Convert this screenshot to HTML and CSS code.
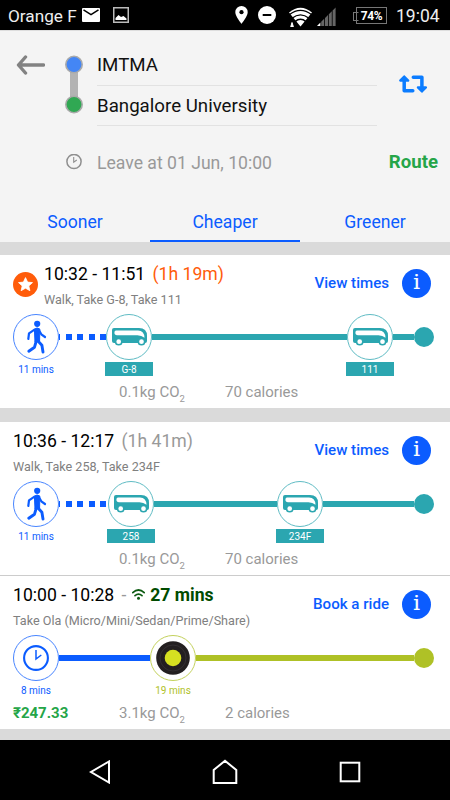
FILE: index.html
```html
<!DOCTYPE html>
<html lang="en">
<head>
<meta charset="UTF-8" />
<meta name="viewport" content="width=device-width, initial-scale=1.0"/>
<title>Trip Planner</title>
<link rel="stylesheet" href="styles.css">
</head>
<body>

<!-- shared icons -->
<svg width="0" height="0" class="sprite">
    <symbol id="walk" viewBox="0 0 46 46">
        <circle cx="24.2" cy="9.8" r="3.1" fill="currentColor"/>
        <path d="M21.4 15.2 Q24 12.8 26.8 15 L26.6 27 L22 28 Z" fill="currentColor" stroke="currentColor" stroke-linejoin="round"/>
        <path d="M21.5 15.7 L16 19.3 L15.3 25 M26.3 16.8 L28.3 20.3 L32 23" fill="none" stroke="currentColor" stroke-width="2.2" stroke-linecap="round" stroke-linejoin="round"/>
        <path d="M25 27 L28.9 31.2 L30 38 M23.3 27 L21.5 33.2 L15.8 37.2" fill="none" stroke="currentColor" stroke-width="2.9" stroke-linecap="round" stroke-linejoin="round"/>
    </symbol>
    <symbol id="bus" viewBox="0 0 35 18">
        <path d="M2 0 H27 Q35 0 35 8 V13 Q35 15 33 15 H2 Q0 15 0 13 V2 Q0 0 2 0 Z" fill="currentColor"/>
        <path d="M4 2.4 H26 Q32.4 2.6 32.5 9.8 Q29.5 7.2 25.5 7.2 H5 Q2.4 7.2 2.4 4.8 Q2.4 2.4 4 2.4 Z" fill="#fff"/>
        <circle cx="6.7" cy="13.7" r="3.1" fill="#fff" stroke="currentColor" stroke-width="1.5"/>
        <circle cx="29.5" cy="13.7" r="3.1" fill="#fff" stroke="currentColor" stroke-width="1.5"/>
    </symbol>
</svg>

<div class="phone">

    <!-- status bar -->
    <div class="status">
        <span class="carrier">Orange F</span>
        <svg class="mail" width="18" height="14" viewBox="0 0 18 14">
            <rect width="18" height="14" rx="1" fill="#fff"/>
            <path d="M1.5 1.8 L9 6.6 L16.5 1.8" fill="none" stroke="#000" stroke-width="1.5"/>
        </svg>
        <svg class="photo" width="16" height="16" viewBox="0 0 16 16">
            <rect x=".75" y=".75" width="14.5" height="14.5" fill="none" stroke="#bbb" stroke-width="1.5"/>
            <path d="M2.5 13 V11 L5.5 8 L8 10 L10.5 9 L13.5 11.5 V13 Z" fill="#fff"/>
        </svg>
        <svg class="pin" width="13" height="18" viewBox="0 0 13 18">
            <path d="M6.5 0 A6.2 6.2 0 0 0 .3 6.2 C.3 10.5 6.5 17.7 6.5 17.7 S12.7 10.5 12.7 6.2 A6.2 6.2 0 0 0 6.5 0 Z" fill="#fff"/>
            <circle cx="6.5" cy="6.2" r="2.1" fill="#000"/>
        </svg>
        <svg class="dnd" width="18" height="18" viewBox="0 0 18 18">
            <circle cx="9" cy="9" r="9" fill="#fff"/>
            <rect x="4.7" y="8" width="8.6" height="2" fill="#000"/>
        </svg>
        <svg class="wifi" width="25" height="20" viewBox="0 0 25 20">
            <path d="M1 5.5 Q12.5 -4 24 5.5 L12.5 19.5 Z" fill="#fff"/>
            <path d="M1.5 7.5 Q12.5 -.7 23.5 7.5 M4 11.2 Q12.5 4.5 21 11.2 M7 14.6 Q12.5 10 18 14.6" fill="none" stroke="#000" stroke-width="1.4"/>
            <path d="M2.8 20 V19.5 L4 15.5 L5.3 19.5 V20 Z" fill="#fff" stroke="#fff"/>
        </svg>
        <svg class="signal" width="19" height="19" viewBox="0 0 19 19">
            <path d="M0 19 L3.4 15.5 V19 Z" fill="#fff"/>
            <path d="M4.2 19 V14.8 L7.2 11.8 V19 Z M8 19 V11 L11 8 V19 Z M11.8 19 V7.2 L14.8 4.2 V19 Z M15.6 19 V3.4 L18.6 .4 V19 Z" fill="#666"/>
        </svg>
        <div class="battery">74%</div>
        <span class="clock">19:04</span>
    </div>

    <!-- route header -->
    <div class="header">
        <div class="route">
            <svg class="back" width="29" height="20" viewBox="0 0 29 20">
                <path d="M27.5 10 H2.5 M9.5 2 L2.5 10 L9.5 18" fill="none" stroke="#828282" stroke-width="3.4" stroke-linecap="round" stroke-linejoin="round"/>
            </svg>
            <svg class="stops" width="18" height="60" viewBox="0 0 18 60">
                <rect x="5" y="10" width="8" height="40" fill="#b3b3b3"/>
                <circle cx="9" cy="9.5" r="8.2" fill="#4486f5" stroke="#aaa" stroke-width="1.6"/>
                <circle cx="9" cy="49.5" r="8.2" fill="#30a853" stroke="#aaa" stroke-width="1.6"/>
            </svg>
            <div class="fields">
                <div class="field">IMTMA</div>
                <div class="field">Bangalore University</div>
            </div>
            <svg class="swap" width="29" height="18" viewBox="0 0 29 18">
                <path d="M5.2 5 V15.8 H13.8" fill="none" stroke="#0b7cff" stroke-width="3.5" stroke-linecap="round" stroke-linejoin="round"/>
                <path d="M14.3 2.2 H22.9 V13" fill="none" stroke="#0b7cff" stroke-width="3.5" stroke-linecap="round" stroke-linejoin="round"/>
                <path d="M1.2 5.6 L5.2 1.4 L9.2 5.6 Z M18.9 12.4 L22.9 16.6 L26.9 12.4 Z" fill="#0b7cff" stroke="#0b7cff" stroke-width="2.2" stroke-linejoin="round"/>
            </svg>
        </div>
        <div class="leave">
            <svg width="16" height="16" viewBox="0 0 16 16">
                <circle cx="8" cy="7.5" r="7.1" fill="none" stroke="#8f8f8f" stroke-width="1.5"/>
                <path d="M7.7 3 V8.2 L10.8 6" fill="none" stroke="#8f8f8f" stroke-width="1.1"/>
            </svg>
            <span class="when">Leave at 01 Jun, 10:00</span>
            <span class="go">Route</span>
        </div>
        <div class="tabs">
            <div class="tab">Sooner</div>
            <div class="tab active">Cheaper</div>
            <div class="tab">Greener</div>
        </div>
    </div>

    <!-- results -->
    <div class="results">

        <div class="trip">
            <div class="trip-head">
                <svg class="star" width="25" height="25" viewBox="0 0 25 25">
                    <circle cx="12.5" cy="12.5" r="12.5" fill="#ff5c0a"/>
                    <path d="M12.5 5.6 L14.6 10.1 L19.5 10.6 L15.8 13.9 L16.9 18.7 L12.5 16.2 L8.1 18.7 L9.2 13.9 L5.5 10.6 L10.4 10.1 Z" fill="#fff" stroke="#fff" stroke-width=".8" stroke-linejoin="round"/>
                </svg>
                <div class="summary">
                    <div class="times">10:32 - 11:51 <span class="best">(1h 19m)</span></div>
                    <div class="steps">Walk, Take G-8, Take 111</div>
                </div>
                <div class="action">View times</div>
                <div class="info">i</div>
            </div>
            <div class="line">
                <div class="node walk"><div class="ring"><svg width="46" height="46"><use href="#walk"/></svg></div><div class="mins">11 mins</div></div>
                <div class="leg dashed" style="width:47px"></div>
                <div class="node bus"><div class="ring"><svg width="35" height="18"><use href="#bus"/></svg></div><div class="tag">G-8</div></div>
                <div class="leg teal" style="width:195px"></div>
                <div class="node bus"><div class="ring"><svg width="35" height="18"><use href="#bus"/></svg></div><div class="tag">111</div></div>
                <div class="leg teal" style="width:21px"></div>
                <div class="end teal"></div>
            </div>
            <div class="stats">
                <span></span>
                <span>0.1kg CO<small>2</small></span>
                <span>70 calories</span>
            </div>
        </div>

        <div class="trip gap">
            <div class="trip-head">
                <div class="summary">
                    <div class="times">10:36 - 12:17 <span class="dur">(1h 41m)</span></div>
                    <div class="steps">Walk, Take 258, Take 234F</div>
                </div>
                <div class="action">View times</div>
                <div class="info">i</div>
            </div>
            <div class="line">
                <div class="node walk"><div class="ring"><svg width="46" height="46"><use href="#walk"/></svg></div><div class="mins">11 mins</div></div>
                <div class="leg dashed" style="width:49px"></div>
                <div class="node bus"><div class="ring"><svg width="35" height="18"><use href="#bus"/></svg></div><div class="tag">258</div></div>
                <div class="leg teal" style="width:123px"></div>
                <div class="node bus"><div class="ring"><svg width="35" height="18"><use href="#bus"/></svg></div><div class="tag">234F</div></div>
                <div class="leg teal" style="width:91px"></div>
                <div class="end teal"></div>
            </div>
            <div class="stats">
                <span></span>
                <span>0.1kg CO<small>2</small></span>
                <span>70 calories</span>
            </div>
        </div>

        <div class="trip ruled">
            <div class="trip-head">
                <div class="summary">
                    <div class="times">10:00 - 10:28 <span class="dur">-</span>
                        <svg class="live" width="13" height="11" viewBox="0 0 13 11">
                            <path d="M.8 3.6 Q6.5 -1.6 12.2 3.6 M3 6.6 Q6.5 3.6 10 6.6" fill="none" stroke="#0b5a10" stroke-width="1.7" stroke-linecap="round"/>
                            <circle cx="6.5" cy="9.2" r="1.5" fill="#0b5a10"/>
                        </svg>
                        <b>27 mins</b>
                    </div>
                    <div class="steps">Take Ola (Micro/Mini/Sedan/Prime/Share)</div>
                </div>
                <div class="action">Book a ride</div>
                <div class="info">i</div>
            </div>
            <div class="line">
                <div class="node walk">
                    <div class="ring">
                        <svg width="26" height="26" viewBox="0 0 26 26">
                            <circle cx="13" cy="13" r="11.9" fill="none" stroke="#0b5cff" stroke-width="2.1"/>
                            <path d="M13 5 V14 L18.3 10" fill="none" stroke="#0b5cff" stroke-width="1.5"/>
                        </svg>
                    </div>
                    <div class="mins">8 mins</div>
                </div>
                <div class="leg blue" style="width:91px"></div>
                <div class="node cab">
                    <div class="ring">
                        <svg width="34" height="34" viewBox="0 0 34 34">
                            <circle cx="17" cy="17" r="16.8" fill="#231f20"/>
                            <circle cx="17" cy="17" r="13" fill="none" stroke="#39353a" stroke-width=".7"/>
                            <circle cx="17" cy="17" r="8.3" fill="#d6e021"/>
                        </svg>
                    </div>
                    <div class="mins">19 mins</div>
                </div>
                <div class="leg lime" style="width:218px"></div>
                <div class="end lime"></div>
            </div>
            <div class="stats">
                <span class="fare">₹247.33</span>
                <span>3.1kg CO<small>2</small></span>
                <span>2 calories</span>
            </div>
        </div>

    </div>

    <!-- android nav -->
    <div class="nav">
        <svg width="22" height="24" viewBox="0 0 22 24"><path d="M20 1.5 V22.5 L2 12 Z" fill="none" stroke="#fff" stroke-width="2"/></svg>
        <svg width="26" height="26" viewBox="0 0 26 26"><path d="M1.7 24 V11 L13 1.8 L24.3 11 V24 Z" fill="none" stroke="#fff" stroke-width="2"/></svg>
        <svg width="22" height="22" viewBox="0 0 22 22"><rect x="1.7" y="1.7" width="18.6" height="18.6" fill="none" stroke="#fff" stroke-width="2"/></svg>
    </div>

</div>

</body>
</html>
```
FILE: styles.css
```css
*{
    margin:0;
    padding:0;
    box-sizing:border-box;
}

:root{
    --blue:#0b5cff;
    --teal:#2ba6b0;
    --lime:#afc126;
    --green:#25a548;
    --muted:#999;
    --band:#dadada;
}

body{
    font-family:Roboto,sans-serif;
    background:#000;
    color:#111;
}

svg{
    display:block;
    flex:none;
}

.sprite{
    position:absolute;
}

.phone{
    width:450px;
    height:800px;
    display:flex;
    flex-direction:column;
    overflow:hidden;
}

/* status bar */
.status{
    height:30px;
    display:flex;
    align-items:center;
    padding:0 10px 0 8px;
    background:#000;
    color:#eee;
}

.carrier{
    width:74px;
    padding-top:1px;
    font-size:17.2px;
    white-space:nowrap;
}

.photo{
    margin-left:13px;
}

.pin{
    margin-left:auto;
}

.dnd{
    margin-left:10px;
}

.wifi{
    margin:3px 0 0 12px;
}

.signal{
    margin:2px 0 0 4px;
}

.battery{
    width:31px;
    height:17px;
    margin-left:20px;
    border:1px solid #777;
    color:#fff;
    font-size:12px;
    font-weight:700;
    line-height:16px;
    letter-spacing:-.3px;
    text-align:center;
    position:relative;
}

.battery::before{
    content:"";
    position:absolute;
    left:-4px;
    top:4px;
    width:4px;
    height:7px;
    border:1px solid #777;
    border-right-color:#000;
}

.clock{
    width:44px;
    padding-top:1px;
    margin-left:9px;
    font-size:17.5px;
    white-space:nowrap;
}

/* header */
.header{
    height:212px;
    background:#f4f4f4;
    border-top:1px solid #ddd;
}

.route{
    display:flex;
    height:95px;
    padding:14px 22px 0 16px;
}

.back{
    margin-top:10px;
}

.stops{
    margin:10px 0 0 20px;
}

.fields{
    width:280px;
    margin-left:14px;
}

.field{
    height:41px;
    line-height:40px;
    font-size:18.7px;
    border-bottom:1px solid #e2e2e2;
}

.field + .field{
    height:40px;
}

.swap{
    margin:30px 0 0 auto;
}

.leave{
    display:flex;
    align-items:center;
    height:72px;
    padding:0 12px 0 66px;
    font-size:17.6px;
}

.when{
    margin-left:15px;
    padding-top:1px;
    color:var(--muted);
}

.go{
    margin-left:auto;
    color:var(--green);
    font-size:18.6px;
    font-weight:700;
}

.tabs{
    display:flex;
    height:44px;
}

.tab{
    flex:1;
    padding-top:13px;
    line-height:22px;
    font-size:17.6px;
    text-align:center;
    color:var(--blue);
}

.tab.active{
    border-bottom:2px solid var(--blue);
}

/* results */
.results{
    height:498px;
    background:var(--band);
    padding-top:13px;
}

.trip{
    height:153px;
    background:#fff;
    padding-left:13px;
}

.gap{
    margin-top:14px;
}

.ruled{
    height:154px;
    border-top:1px solid #ccc;
}

.trip-head{
    display:flex;
    height:59px;
    padding-right:19px;
}

.star{
    margin:17px 6px 0 0;
}

.summary{
    padding-top:8px;
    white-space:nowrap;
}

.times{
    height:22px;
    line-height:22px;
    font-size:17.6px;
    color:#000;
}

.best{
    margin-left:3px;
    color:#ff5c0a;
}

.dur{
    margin-left:3px;
    color:var(--muted);
}

.live{
    display:inline-block;
    margin-left:1px;
    vertical-align:1px;
}

.times b{
    margin-left:1px;
    color:#004b00;
}

.steps{
    padding-top:6px;
    line-height:18px;
    font-size:12.6px;
    color:#808080;
}

.action{
    margin-left:auto;
    padding-top:18px;
    line-height:20px;
    font-size:15.1px;
    font-weight:500;
    color:var(--blue);
}

.info{
    width:29px;
    height:29px;
    margin:14px 0 0 13px;
    border-radius:50%;
    background:var(--blue);
    color:#fff;
    font:21px/27px "DejaVu Serif",serif;
    -webkit-text-stroke:.2px #fff;
    text-align:center;
}

.line{
    display:flex;
    height:66px;
}

.node{
    width:46px;
    flex:none;
}

.ring{
    width:46px;
    height:46px;
    border:1px solid color-mix(in srgb, currentColor 75%, #fff);
    border-radius:50%;
    display:flex;
    align-items:center;
    justify-content:center;
}

.walk{
    color:var(--blue);
}

.bus{
    color:var(--teal);
}

.cab{
    color:var(--lime);
}

.mins{
    padding-top:3px;
    line-height:14px;
    font-size:10px;
    text-align:center;
    white-space:nowrap;
}

.tag{
    height:14px;
    margin:2px -1px 0;
    background:var(--teal);
    color:#fff;
    line-height:15px;
    font-size:10px;
    text-align:center;
}

.leg{
    flex:none;
    height:6px;
    margin-top:20px;
}

.dashed{
    background:repeating-linear-gradient(90deg,var(--blue) 0 1.5px,transparent 1.5px 6.8px,var(--blue) 6.8px 11.4px);
}

.end{
    width:20px;
    height:20px;
    margin-top:13px;
    border-radius:50%;
}

.teal{
    background:var(--teal);
}

.blue{
    background:var(--blue);
}

.lime{
    background:var(--lime);
}

.stats{
    display:grid;
    grid-template-columns:106px 106px 1fr;
    padding-top:2px;
    line-height:20px;
    font-size:15px;
    color:var(--muted);
}

.stats small{
    font-size:9.5px;
    position:relative;
    top:5px;
}

.fare{
    color:var(--green);
    font-weight:700;
}

/* android nav */
.nav{
    height:60px;
    display:flex;
    align-items:center;
    justify-content:space-between;
    padding:3px 89px 0;
    background:#000;
}
```
